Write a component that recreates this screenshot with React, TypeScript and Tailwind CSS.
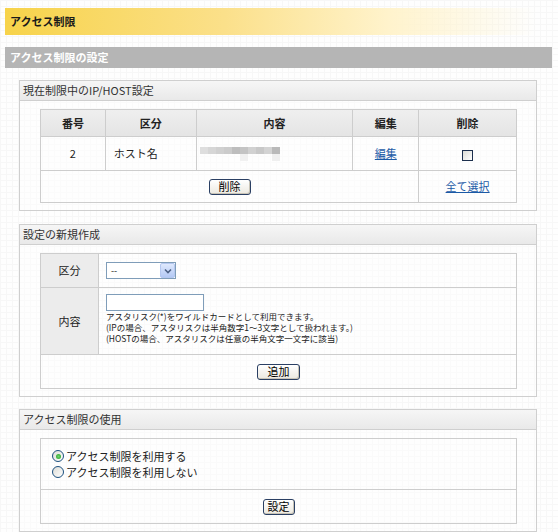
import React from "react";

const font = { fontFamily: '"Noto Sans CJK JP", "Noto Sans", sans-serif' };

function Btn({ children, w }: { children: React.ReactNode; w: string }) {
  return (
    <span
      className={`inline-flex items-center justify-center h-[16px] ${w} rounded-[3px] border border-[#2a3f63] bg-[linear-gradient(#ffffff,#ece9e0)] text-[11px] leading-none text-black shadow-[inset_-1px_-1px_0_#c9c4b6]`}
    >
      {children}
    </span>
  );
}

function Section({ title, children, mt }: { title: string; children: React.ReactNode; mt: string }) {
  return (
    <div className={`${mt} ml-[19px] w-[518px] border border-[#cfcfcf] bg-white/40`}>
      <div className="h-[20px] border-b border-[#cfcfcf] bg-[linear-gradient(#f6f6f6,#e9e9e9)] pl-[3px] text-[11px] leading-[19px] text-[#333]">
        {title}
      </div>
      <div className="px-[20px] pt-[8px] pb-[7px]">{children}</div>
    </div>
  );
}

const mosaic: string[][] = [
  ["#dedede", "#d6d6d6", "#d0d0d0", "#cbcbcb", "#bdbdbd", "#c4c4c4", "#d1d1d1", "#c8c8c8", "#d3d3d3", "#b9b9b9"],
  ["transparent", "transparent", "transparent", "transparent", "transparent", "#f1f1f1", "transparent", "transparent", "transparent", "#efefef"],
];

export default function App() {
  const cell = "border border-[#cdcdcd]";
  return (
    <div
      style={font}
      className="w-[558px] h-[532px] overflow-hidden pt-[8px] text-[#222] bg-[#fefefe] bg-[linear-gradient(to_right,#f7f7f7_1px,transparent_1px),linear-gradient(to_bottom,#f7f7f7_1px,transparent_1px)] bg-[size:6px_6px]"
    >
      <div className="ml-[5px] w-[548px] h-[27px] bg-[linear-gradient(to_right,#f7d34a_0%,#fbe08a_40%,#fff3cc_70%,rgba(255,255,255,0)_97%)] pl-[5px] text-[11px] font-bold leading-[27px] text-[#1a1a1a]">
        アクセス制限
      </div>
      <div className="mt-[12px] ml-[5px] w-[547px] h-[21px] bg-[#b5b5b5] pl-[5px] text-[11px] font-bold leading-[21px] text-white">
        アクセス制限の設定
      </div>

      <Section title="現在制限中のIP/HOST設定" mt="mt-[12px]">
        <table className="w-[477px] border-collapse text-[11px] bg-white/30">
          <colgroup>
            <col className="w-[65px]" />
            <col className="w-[91px]" />
            <col className="w-[157px]" />
            <col className="w-[66px]" />
            <col className="w-[98px]" />
          </colgroup>
          <tbody>
            <tr className="h-[27px] bg-[linear-gradient(#efefef,#e4e4e4)] font-bold">
              <td className={`${cell} text-center`}>番号</td>
              <td className={`${cell} text-center`}>区分</td>
              <td className={`${cell} text-center`}>内容</td>
              <td className={`${cell} text-center`}>編集</td>
              <td className={`${cell} text-center`}>削除</td>
            </tr>
            <tr className="h-[34px]">
              <td className={`${cell} text-center`}>2</td>
              <td className={`${cell} pl-[8px]`}>ホスト名</td>
              <td className={`${cell} pl-[3px]`}>
                <div className="flex flex-col blur-[0.6px]">
                  {mosaic.map((row, i) => (
                    <div key={i} className="flex">
                      {row.map((c, j) => (
                        <div key={j} className="w-[8px] h-[7px]" style={{ background: c }} />
                      ))}
                    </div>
                  ))}
                </div>
              </td>
              <td className={`${cell} text-center`}>
                <span className="text-[#1b5aa6] underline">編集</span>
              </td>
              <td className={`${cell} text-center`}>
                <span className="inline-block align-middle w-[11px] h-[11px] border border-[#1c2f4d] bg-[linear-gradient(135deg,#dcdcd6,#ffffff)]" />
              </td>
            </tr>
            <tr className="h-[32px]">
              <td colSpan={4} className={`${cell} text-center`}>
                <Btn w="w-[42px]">削除</Btn>
              </td>
              <td className={`${cell} text-center`}>
                <span className="text-[#1b5aa6] underline">全て選択</span>
              </td>
            </tr>
          </tbody>
        </table>
      </Section>

      <Section title="設定の新規作成" mt="mt-[13px]">
        <table className="w-[477px] border-collapse text-[11px]">
          <colgroup>
            <col className="w-[58px]" />
            <col />
          </colgroup>
          <tbody>
            <tr className="h-[34px]">
              <td className={`${cell} bg-[#ececec] text-center`}>区分</td>
              <td className={`${cell} pl-[7px]`}>
                <div className="flex items-center w-[70px] h-[17px] border border-[#7f9db9] bg-white">
                  <span className="flex-1 pl-[4px] text-[9px] leading-none">--</span>
                  <span className="flex items-center justify-center w-[15px] h-[15px] rounded-[2px] border border-[#b5c8f0] bg-[linear-gradient(#dfe9fd,#b4c9f5)]">
                    <svg width="8" height="6" viewBox="0 0 8 6">
                      <path d="M1 1.5 L4 4.5 L7 1.5" fill="none" stroke="#4d6185" strokeWidth="1.6" />
                    </svg>
                  </span>
                </div>
              </td>
            </tr>
            <tr className="h-[67px]">
              <td className={`${cell} bg-[#ececec] text-center`}>内容</td>
              <td className={`${cell} pl-[7px] align-top pt-[6px]`}>
                <div className="w-[98px] h-[17px] border border-[#7f9db9] bg-white" />
                <div className="text-[8.5px] leading-[11px] text-[#222] whitespace-nowrap">
                  <div>アスタリスク(*)をワイルドカードとして利用できます。</div>
                  <div>(IPの場合、アスタリスクは半角数字1～3文字として扱われます。)</div>
                  <div>(HOSTの場合、アスタリスクは任意の半角文字一文字に該当)</div>
                </div>
              </td>
            </tr>
            <tr className="h-[34px]">
              <td colSpan={2} className={`${cell} text-center`}>
                <Btn w="w-[43px]">追加</Btn>
              </td>
            </tr>
          </tbody>
        </table>
      </Section>

      <Section title="アクセス制限の使用" mt="mt-[12px]">
        <table className="w-[477px] border-collapse text-[11px]">
          <tbody>
            <tr className="h-[51px]">
              <td className={`${cell} pl-[11px]`}>
                <div className="flex flex-col gap-[2px]">
                  <label className="flex items-center gap-[2px] h-[14px]">
                    <span className="flex items-center justify-center w-[12px] h-[12px] rounded-full border border-[#1c5180] bg-[linear-gradient(135deg,#dcdcd6,#ffffff)]">
                      <span className="w-[5px] h-[5px] rounded-full bg-[radial-gradient(circle,#6fd36f,#21a121)]" />
                    </span>
                    アクセス制限を利用する
                  </label>
                  <label className="flex items-center gap-[2px] h-[14px]">
                    <span className="w-[12px] h-[12px] rounded-full border border-[#1c5180] bg-[linear-gradient(135deg,#dcdcd6,#ffffff)]" />
                    アクセス制限を利用しない
                  </label>
                </div>
              </td>
            </tr>
            <tr className="h-[34px]">
              <td className={`${cell} text-center`}>
                <Btn w="w-[32px]">設定</Btn>
              </td>
            </tr>
          </tbody>
        </table>
      </Section>
    </div>
  );
}
